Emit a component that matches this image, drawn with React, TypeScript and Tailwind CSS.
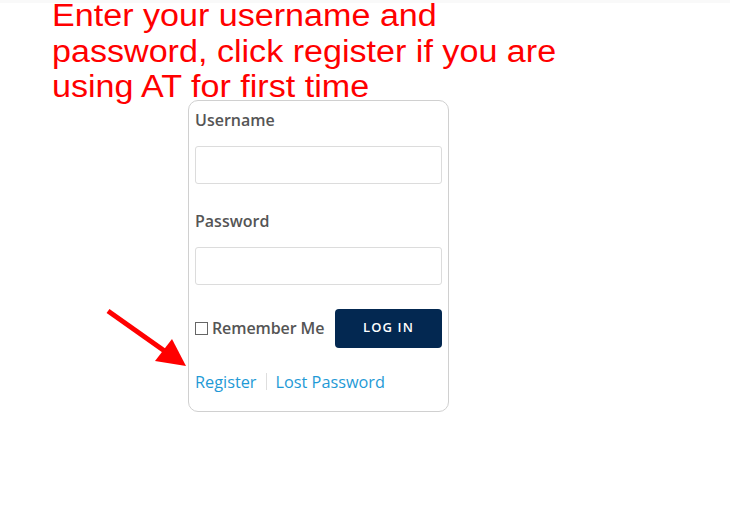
export default function App() {
  return (
    <div className="relative w-[730px] h-[512px] bg-white overflow-hidden">
      {/* faint top strip */}
      <div className="h-[3px] bg-[#f9f9f9]" />

      {/* instruction */}
      <p className="relative z-10 mt-[-5px] ml-[52px] w-[475px] origin-left scale-x-[1.1] text-[31px] leading-[35.5px] text-[#ff0000] font-['Liberation_Sans',Arial,sans-serif]">
        Enter your username and password, click register if you are using AT for first time
      </p>

      {/* login box */}
      <div className="relative mt-[-5px] ml-[188px] w-[261px] rounded-[10px] border border-[#d0d0d0] px-[6px] pt-[7px] pb-[17px] font-['Open_Sans',sans-serif] text-[#555]">
        <label className="block text-[16px] leading-6 font-semibold">Username</label>
        <input
          type="text"
          className="mt-[14px] block w-[247px] h-[38px] rounded-[3px] border border-[#dcdcdc] bg-white outline-none"
        />
        <label className="mt-[25px] block text-[16px] leading-6 font-semibold">Password</label>
        <input
          type="password"
          className="mt-[14px] block w-[247px] h-[38px] rounded-[3px] border border-[#dcdcdc] bg-white outline-none"
        />

        <div className="mt-[24px] flex items-center justify-between">
          <label className="flex items-center gap-[4px] text-[16px] leading-6 font-semibold tracking-[-0.1px]">
            <span className="inline-block w-[13px] h-[13px] border border-[#666] bg-white" />
            Remember Me
          </label>
          <button className="w-[107px] h-[39px] rounded-[4px] bg-[#032851] text-white text-[13px] font-semibold tracking-[1.1px]">
            LOG IN
          </button>
        </div>

        <div className="mt-[22px] flex items-center text-[16.3px] leading-6 text-[#1f9ad6]">
          <a>Register</a>
          <span className="mx-[9px] h-[17px] w-px bg-[#dedede]" />
          <a>Lost Password</a>
        </div>
      </div>

      {/* arrow annotation */}
      <svg className="absolute left-0 top-0 pointer-events-none" width="730" height="512">
        <line x1="108" y1="311" x2="166" y2="352" stroke="#ff0000" strokeWidth="5" />
        <polygon points="155,361 172,339 186,366" fill="#ff0000" />
      </svg>
    </div>
  );
}
